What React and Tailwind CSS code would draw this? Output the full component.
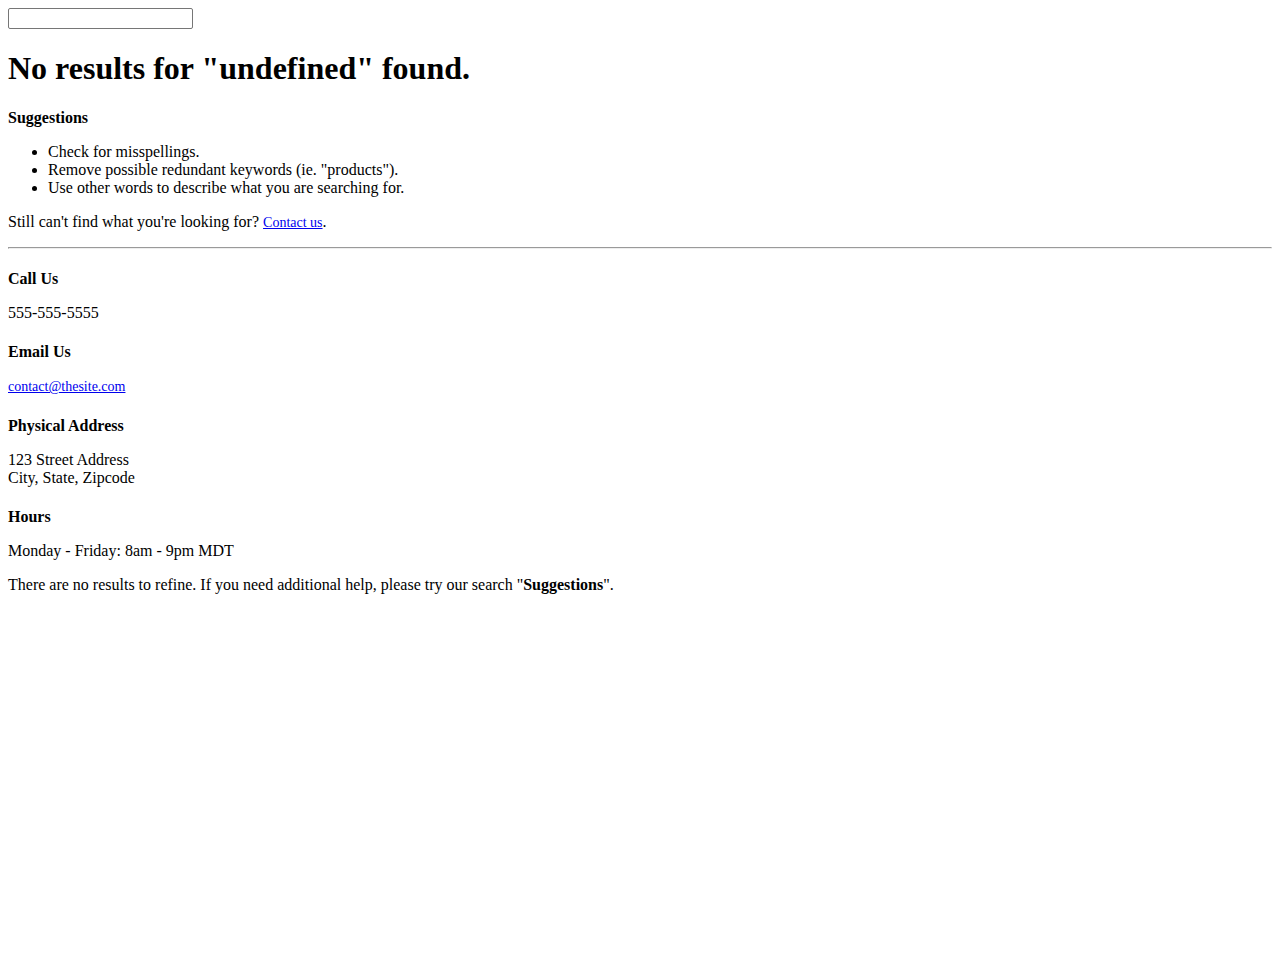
export default function App() {
  return (
    <div className="bg-white p-2 font-['Liberation_Serif','Times_New_Roman',serif] text-black text-[16px] leading-[normal]">
      <div className="h-[21px]">
        <input
          type="text"
          aria-label="Search"
          className="block h-[21px] w-[185px] rounded-[2px] border border-[#767676] bg-white px-[2px] text-[13.33px] font-['Liberation_Sans',Arial,sans-serif]"
        />
      </div>

      <h1 className="mt-[21.44px] text-[32px] leading-[normal] font-bold">No results for "undefined" found.</h1>

      <h4 className="mt-[21.44px] font-bold">Suggestions</h4>
      <ul className="mt-4 list-disc pl-10">
        <li>Check for misspellings.</li>
        <li>Remove possible redundant keywords (ie. "products").</li>
        <li>Use other words to describe what you are searching for.</li>
      </ul>
      <p className="mt-4">
        Still can't find what you're looking for?{" "}
        <a href="#" className="text-[14px] text-[#0000ee] underline">Contact us</a>.
      </p>

      <hr className="mt-4 h-[2px] border border-t-[#9a9a9a] border-l-[#9a9a9a] border-b-[#eeeeee] border-r-[#eeeeee]" />

      <h4 className="mt-[21.28px] font-bold">Call Us</h4>
      <p className="mt-4">555-555-5555</p>

      <h4 className="mt-[21.28px] font-bold">Email Us</h4>
      <p className="mt-4">
        <a href="#" className="text-[14px] text-[#0000ee] underline">contact@thesite.com</a>
      </p>

      <h4 className="mt-[21.28px] font-bold">Physical Address</h4>
      <p className="mt-4">
        123 Street Address
        <br />
        City, State, Zipcode
      </p>

      <h4 className="mt-[21.28px] font-bold">Hours</h4>
      <p className="mt-4">Monday - Friday: 8am - 9pm MDT</p>

      <p className="mt-4">
        There are no results to refine. If you need additional help, please try our search "<strong className="font-bold">Suggestions</strong>".
      </p>
    </div>
  );
}
